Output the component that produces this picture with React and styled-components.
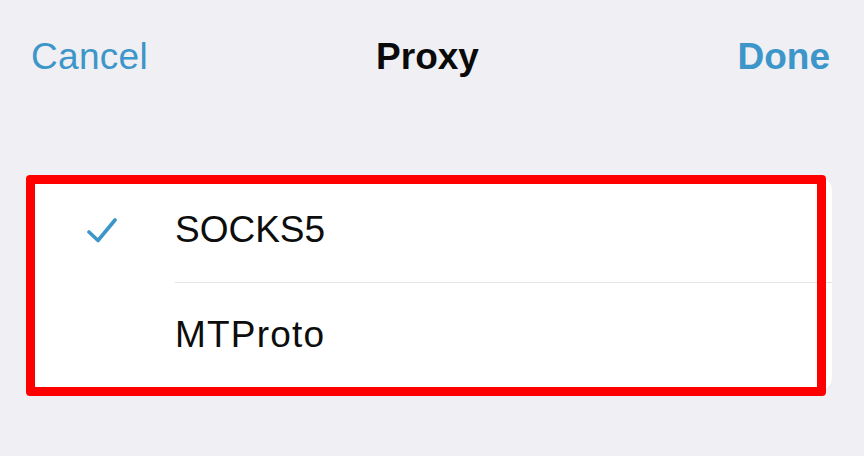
import styled, { createGlobalStyle } from "styled-components";

const GlobalStyle = createGlobalStyle`
  html, body {
    margin: 0;
    padding: 0;
    background: #efeff4;
  }
  body {
    font-family: "Liberation Sans", Arial, sans-serif;
    -webkit-font-smoothing: antialiased;
  }
`;

const Screen = styled.div`
  width: 864px;
  height: 456px;
  background: #efeff4;
  overflow: hidden;
`;

const NavBar = styled.header`
  display: grid;
  grid-template-columns: 1fr auto 1fr;
  align-items: center;
  height: 113px;
  padding: 0 34px 0 31px;
  font-size: 37px;
  line-height: 37px;
`;

const NavButton = styled.span`
  color: #3d96c9;
  font-weight: ${(props) => (props.bold ? 700 : 400)};
  justify-self: ${(props) => (props.end ? "end" : "start")};
  letter-spacing: ${(props) => (props.bold ? "0" : "0.3px")};
`;

const Title = styled.span`
  color: #0a0a0a;
  font-weight: 700;
  margin-right: 6px;
`;

const Card = styled.section`
  position: relative;
  margin: 65px 32px 0 32px;
  background: #ffffff;
  border-radius: 12px;
`;

const Row = styled.div`
  display: flex;
  align-items: center;
  height: ${(props) => props.h}px;
`;

const CheckCell = styled.div`
  width: 143px;
  padding-left: 55px;
  box-sizing: border-box;
  display: flex;
  align-items: center;
`;

const Label = styled.div`
  flex: 1;
  align-self: stretch;
  display: flex;
  align-items: center;
  padding-bottom: ${(props) => (props.divider ? 0 : 4)}px;
  font-size: 37px;
  letter-spacing: ${(props) => props.spacing}px;
  color: #0d0d0d;
  border-bottom: ${(props) => (props.divider ? "1px solid #e4e4e8" : "none")};
`;

const Highlight = styled.div`
  position: absolute;
  top: -3px;
  left: -6px;
  right: 6px;
  bottom: -6px;
  border: 9.5px solid #ff0000;
  border-radius: 4px;
  pointer-events: none;
`;

function Check() {
  return (
    <svg width="30" height="26" viewBox="0 0 30 26">
      <path
        d="M2 14 L11 22.5 L28 2"
        fill="none"
        stroke="#3d96c9"
        strokeWidth="3.6"
        strokeLinecap="round"
        strokeLinejoin="round"
      />
    </svg>
  );
}

const options = [
  { name: "SOCKS5", selected: true, spacing: 0 },
  { name: "MTProto", selected: false, spacing: 1.2 },
];

export default function App() {
  return (
    <Screen>
      <GlobalStyle />
      <NavBar>
        <NavButton>Cancel</NavButton>
        <Title>Proxy</Title>
        <NavButton bold end>
          Done
        </NavButton>
      </NavBar>
      <Card>
        {options.map((opt, i) => (
          <Row key={opt.name} h={i === 0 ? 105 : 107}>
            <CheckCell>{opt.selected && <Check />}</CheckCell>
            <Label divider={i < options.length - 1} spacing={opt.spacing}>
              {opt.name}
            </Label>
          </Row>
        ))}
        <Highlight />
      </Card>
    </Screen>
  );
}
